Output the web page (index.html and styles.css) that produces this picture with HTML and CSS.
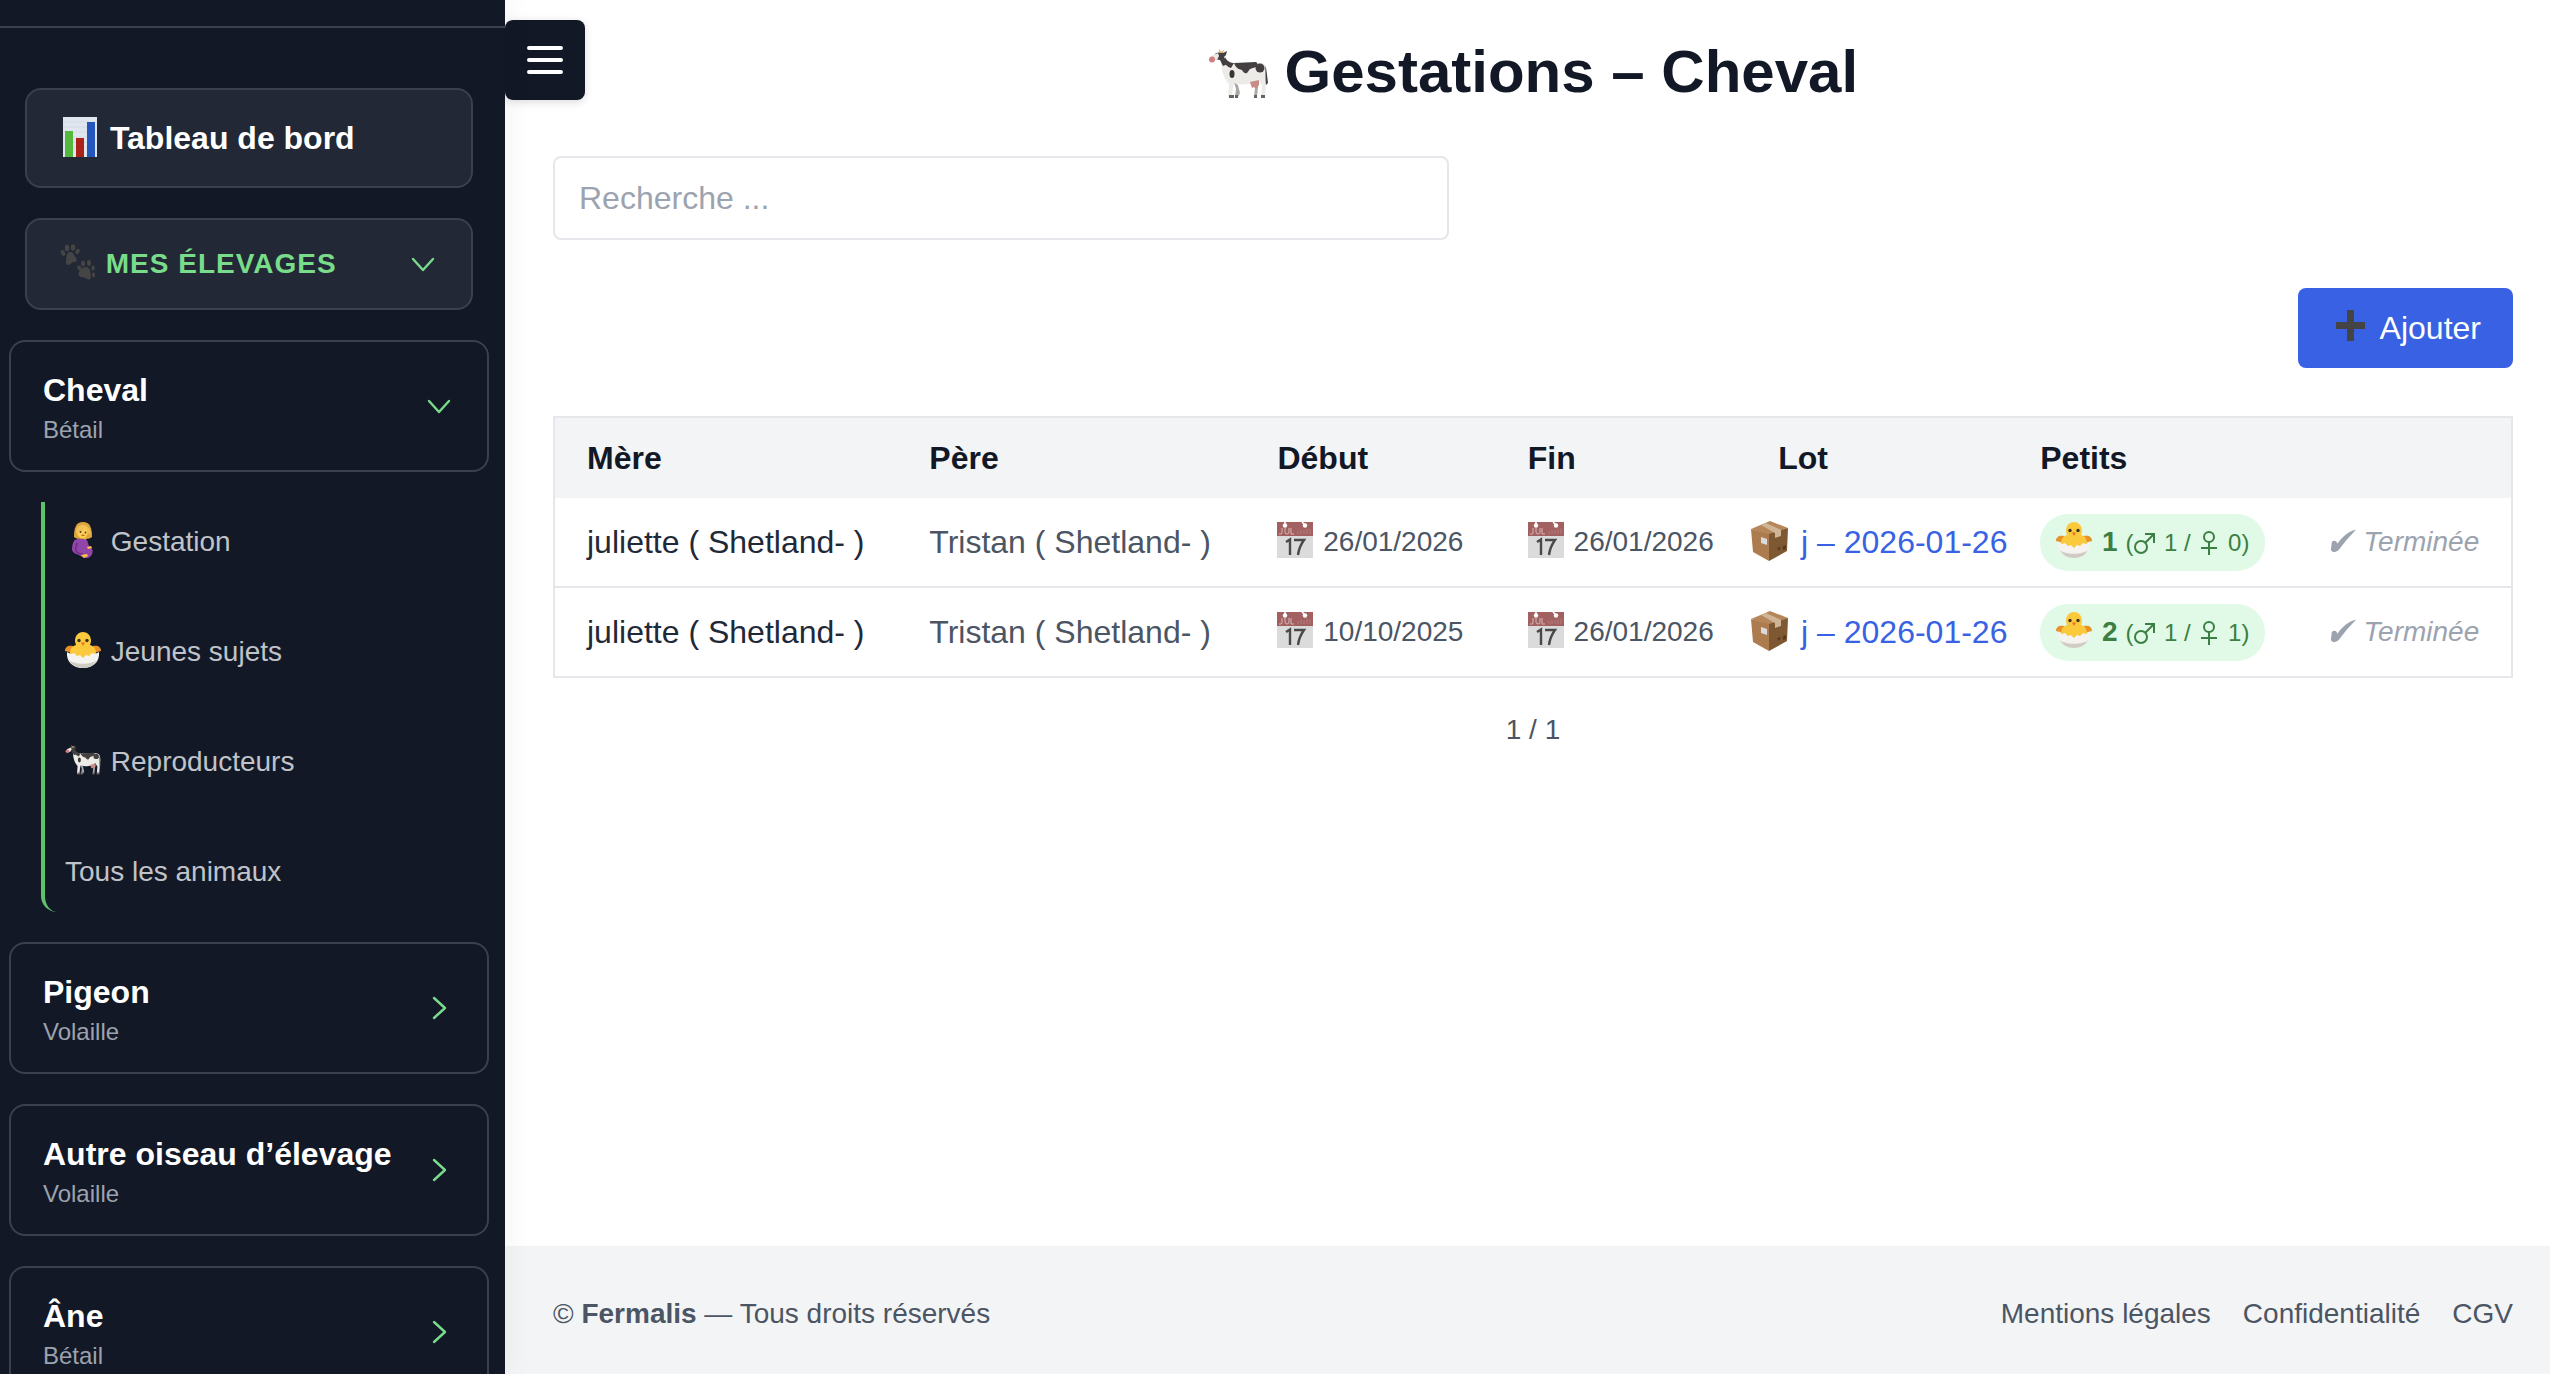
FILE: index.html
```html
<!DOCTYPE html>
<html lang="fr">
<head>
  <meta charset="UTF-8">
  <meta name="viewport" content="width=device-width, initial-scale=1.0">
  <title>Gestations – Cheval</title>
  <link rel="stylesheet" href="styles.css">
</head>
<body>
  <!-- icons -->
  <svg class="sprite" aria-hidden="true">
    <symbol id="chart" viewBox="0 0 40 40">
      <rect x="4" y="0" width="34" height="40" fill="#dfe6f0"/>
      <path d="M4 5h34M4 10h34M4 15h34M4 20h34M4 25h34M4 30h34" stroke="#d3dae5" stroke-width="1"/>
      <rect x="6" y="14" width="8" height="26" fill="#54b83c"/>
      <rect x="17" y="21" width="8" height="19" fill="#ac2218"/>
      <rect x="28" y="5" width="8" height="35" fill="#2456bd"/>
    </symbol>
    <symbol id="paws" viewBox="0 0 36 36">
      <g fill="#454545">
        <ellipse cx="4" cy="9" rx="2" ry="3" transform="rotate(-25 4 9)"/>
        <ellipse cx="8" cy="4" rx="2.2" ry="3.3"/>
        <ellipse cx="14" cy="3.5" rx="2.2" ry="3.3"/>
        <ellipse cx="18.5" cy="7.5" rx="1.9" ry="2.8" transform="rotate(25 18.5 7.5)"/>
        <path d="M11 8c3 0 4 3 5.500 5 2 2.500 1 5-1.500 5-2 0-2 .5-3.500 2-2 2-5 .5-4.500-2.500C7.500 14 7 8 11 8z"/>
        <ellipse cx="20.5" cy="24" rx="1.9" ry="2.8" transform="rotate(-35 20.5 24)"/>
        <ellipse cx="24" cy="19.5" rx="2" ry="3"/>
        <ellipse cx="30" cy="19" rx="2" ry="3"/>
        <ellipse cx="34" cy="24" rx="1.7" ry="2.6"/>
        <ellipse cx="34.5" cy="31" rx="1.5" ry="2.4"/>
        <path d="M27 23c3 0 4 3 4.500 6 .5 3 1 6-1.500 6.500-2 .3-2.500-1.500-4.500-2-3-.5-6-.5-6-3.500 0-3 4-7 7.500-7z"/>
      </g>
    </symbol>
    <symbol id="woman" viewBox="0 0 36 36">
      <path d="M9 15C9 6 11 0 18 0s9 6 9 15c-3 3-15 3-18 0z" fill="#dda63c"/>
      <path d="M15 13h6v7h-6z" fill="#f0b82f"/>
      <path d="M12 8c0-6 11-6 11 0 0 5-2 8-5.500 8S12 13 12 8z" fill="#fdd053"/>
      <path d="M11 11C10 1 25-1 26 13c-2-1-4-3-6-7-2 3-5 4-9 5z" fill="#efbf58"/>
      <circle cx="15.500" cy="10" r=".9" fill="#5b3d17"/>
      <circle cx="20.500" cy="10.500" r=".9" fill="#5b3d17"/>
      <path d="M16.500 13.500q1.500-1 3 0" stroke="#a5491c" fill="none"/>
      <path d="M10 18c5-2 8-1 12 0l2 6c5 1 5 10-1 12-3 1-6-1-9-3-4-1-7-3-7-6s1-8 3-9z" fill="#9245a9"/>
      <path d="M12 21c-1 5-2 6-1 8s4 3 7 3" stroke="#6d2b86" stroke-width="1.500" fill="none"/>
      <path d="M16 33l6-1 1 2-4 2zM22 25l4-1 1 2-4 1z" fill="#fdc042"/>
    </symbol>
    <symbol id="chick" viewBox="0 0 36 36">
      <path d="M0 19c0-4 3-6 8-5l4 8H8l-4-2zM36 19c0-4-3-6-8-5l-4 8h4l4-2z" fill="#e8932a"/>
      <path d="M10 9c0-12 16-12 16 0 0 2-1 3-1 4 4 1 6 4 6 9l-4 6H9l-4-6c0-5 2-8 6-9 0-1-1-2-1-4z" fill="#fbc93c"/>
      <circle cx="14" cy="8.500" r="1.700" fill="#3f3217"/>
      <circle cx="22" cy="8.500" r="1.700" fill="#3f3217"/>
      <path d="M16 10.500h4l-2 3.500z" fill="#e8711d"/>
      <path d="M2 20l4 2 3-1 3 3 3-1 3 3 3-3 3 1 3-3 3 1 4-2c1 10-6 16-16 16S1 30 2 20z" fill="#f4f3f0"/>
      <path d="M4 28c5 5 23 5 28 0-2 5-8 8-14 8S6 33 4 28z" fill="#cfccc4"/>
    </symbol>
    <symbol id="cow" viewBox="0 0 60 50">
      <path d="M26 33l4 3 2 8-2 4h-3l1-8zM46 30l4 8-1 10h-3l1-9z" fill="#aaa8a7"/>
      <path d="M14 10c4 2 8 4 14 4 9 1 20-1 26 0 4 1 5 5 5 12l-1 9-1 13h-4l1-12-4-6c-2 4-6 5-11 5-5 1-9 0-13-1l-1 5-1 9h-4l1-13c-5-5-8-14-8-25z" fill="#ecebe7"/>
      <path d="M8 4l5-1 2 1 4-2-1 4-2 2c1 3 3 5 6 6l-7 3-3-6-6-1-1-2z" fill="#444041"/>
      <path d="M3 7l7-3 1 3-2 4-5 2z" fill="#ece8e3"/>
      <ellipse cx="4" cy="10.500" rx="3" ry="3" fill="#cf8080"/>
      <path d="M11 4l0-4 2 3 3-2-1 3z" fill="#d4ad65"/>
      <path d="M17 8c2 4 5 6 10 6h-1l-3 5c-4-1-6-4-7-7z" fill="#444041"/>
      <path d="M26 14l22-1c2 1 2 3 0 5l-6 2-3 4c-2 1-4-1-5-3-5-1-7-4-8-7z" fill="#444041"/>
      <ellipse cx="24" cy="25" rx="2.500" ry="4" fill="#383536"/>
      <ellipse cx="52" cy="19" rx="4.500" ry="4.500" fill="#444041"/>
      <path d="M57 17c2 4 2 10 3 17l-2 2c-1-6 0-13-1-19z" fill="#444041"/>
      <path d="M42 33l9-2 0 5-3 4-2-2-2 1z" fill="#c88b87"/>
      <path d="M21 46h5v3h-5zM27 46h3v3h-3zM46 46h3v3h-3zM53 46h4v3h-4z" fill="#69625f"/>
    </symbol>
    <symbol id="calendar" viewBox="0 0 36 36">
      <rect width="36" height="36" fill="#dbdbdb"/>
      <rect width="36" height="14" fill="#a26060"/>
      <circle cx="8" cy="3.500" r="2.200" fill="#fff"/>
      <circle cx="28" cy="3.500" r="2.200" fill="#fff"/>
      <path d="M8 0v3M25 0l3 3" stroke="#fff" stroke-width="1.500"/>
      <path d="M5 6v5q0 1.500-3 1M8 6v4q0 2 2 2t2-2V6M14 6v6h3" stroke="#d5b5b5" stroke-width="1" fill="none"/>
      <path d="M21 9v3M24 8v4M27 8v4M30 7v5M33 7v5" stroke="#b67f7f" stroke-width="1"/>
      <path d="M9 20l4-2.500V33M17 18h10q-5 7-6 15" stroke="#484848" stroke-width="2.400" fill="none"/>
    </symbol>
    <symbol id="box" viewBox="0 0 40 40">
      <path d="M1 8L20 0l18 7-18 7z" fill="#b5875b"/>
      <path d="M1 8l18 5v27L3 31z" fill="#ac7b4e"/>
      <path d="M38 7l-19 6v27l18-10z" fill="#7e5833"/>
      <path d="M11 4l5-2 15 7v6l-6 2v-5z" fill="#cfb595"/>
      <path d="M11 16l6 2v6l-6-2z" fill="#d9dadb"/>
      <path d="M27 27l4-1-2 4zM33 25l3-1v4l-3 1z" fill="#57391d"/>
    </symbol>
    <symbol id="plus" viewBox="0 0 40 40">
      <path d="M17 3h7v12h11v7H24v12h-7V22H6v-7h11z" fill="#444"/>
    </symbol>
    <symbol id="check" viewBox="0 0 28 28">
      <path d="M2 15c2-2 5-2 6 2C13 10 19 4 28 2 21 9 15 16 10 23c-3 4-9 4-9 0z" fill="currentColor"/>
    </symbol>
    <symbol id="male" viewBox="0 0 24 28">
      <path d="M12 15L20 7M12 6h9v9" stroke="currentColor" stroke-width="2" fill="none"/>
      <circle cx="8" cy="19" r="6" stroke="currentColor" stroke-width="2" fill="none"/>
    </symbol>
    <symbol id="female" viewBox="0 0 24 28">
      <circle cx="12" cy="9" r="5" stroke="currentColor" stroke-width="2" fill="none"/>
      <path d="M12 14v13M4 20h16" stroke="currentColor" stroke-width="2"/>
    </symbol>
    <symbol id="down" viewBox="0 0 32 32">
      <path d="M6 11l10 11 10-11" fill="none" stroke="currentColor" stroke-width="2.400" stroke-linecap="round" stroke-linejoin="round"/>
    </symbol>
    <symbol id="right" viewBox="0 0 32 32">
      <path d="M11 6l11 10-11 10" fill="none" stroke="currentColor" stroke-width="2.400" stroke-linecap="round" stroke-linejoin="round"/>
    </symbol>
  </svg>

  <div class="layout">
    <aside class="sidebar">
      <div class="sidebar-header"></div>
      <nav class="sidebar-nav">
        <a href="#" class="menu-card dashboard"><span><svg class="emoji emoji-lg"><use href="#chart"/></svg> Tableau de bord</span></a>
        <button type="button" class="menu-card section">
          <span><svg class="emoji"><use href="#paws"/></svg> MES ÉLEVAGES</span>
          <svg class="chevron"><use href="#down"/></svg>
        </button>
        <button type="button" class="animal-card">
          <span class="animal"><span class="animal-name">Cheval</span><span class="animal-type">Bétail</span></span>
          <svg class="chevron"><use href="#down"/></svg>
        </button>
        <div class="submenu">
          <a href="#"><svg class="emoji"><use href="#woman"/></svg> Gestation</a>
          <a href="#"><svg class="emoji"><use href="#chick"/></svg> Jeunes sujets</a>
          <a href="#"><svg class="emoji"><use href="#cow"/></svg> Reproducteurs</a>
          <a href="#">Tous les animaux</a>
        </div>
        <button type="button" class="animal-card">
          <span class="animal"><span class="animal-name">Pigeon</span><span class="animal-type">Volaille</span></span>
          <svg class="chevron"><use href="#right"/></svg>
        </button>
        <button type="button" class="animal-card">
          <span class="animal"><span class="animal-name">Autre oiseau d’élevage</span><span class="animal-type">Volaille</span></span>
          <svg class="chevron"><use href="#right"/></svg>
        </button>
        <button type="button" class="animal-card">
          <span class="animal"><span class="animal-name">Âne</span><span class="animal-type">Bétail</span></span>
          <svg class="chevron"><use href="#right"/></svg>
        </button>
      </nav>
    </aside>

    <div class="page">
      <button type="button" class="toggle" aria-label="Menu">
        <span></span>
        <span></span>
        <span></span>
      </button>
      <main class="content">
        <h1><svg class="emoji emoji-xl"><use href="#cow"/></svg> Gestations – Cheval</h1>
        <input type="search" class="search" placeholder="Recherche ..." aria-label="Recherche">
        <div class="actions">
          <button type="button" class="add"><svg class="emoji emoji-lg"><use href="#plus"/></svg> Ajouter</button>
        </div>
        <table class="list">
          <colgroup>
            <col class="col-mother">
            <col class="col-father">
            <col class="col-date">
            <col class="col-date">
            <col class="col-lot">
            <col class="col-petits">
            <col>
          </colgroup>
          <thead>
            <tr>
              <th>Mère</th>
              <th>Père</th>
              <th>Début</th>
              <th>Fin</th>
              <th>Lot</th>
              <th>Petits</th>
              <th></th>
            </tr>
          </thead>
          <tbody>
            <tr>
              <td class="mother">juliette ( Shetland- )</td>
              <td>Tristan ( Shetland- )</td>
              <td class="date"><svg class="emoji"><use href="#calendar"/></svg> 26/01/2026</td>
              <td class="date"><svg class="emoji"><use href="#calendar"/></svg> 26/01/2026</td>
              <td class="lot"><a href="#"><svg class="emoji emoji-lg"><use href="#box"/></svg> j – 2026-01-26</a></td>
              <td><span class="pill"><svg class="emoji"><use href="#chick"/></svg> <b>1</b> <small>(<svg class="sex"><use href="#male"/></svg> 1 / <svg class="sex"><use href="#female"/></svg> 0)</small></span></td>
              <td class="status"><svg class="check"><use href="#check"/></svg> Terminée</td>
            </tr>
            <tr>
              <td class="mother">juliette ( Shetland- )</td>
              <td>Tristan ( Shetland- )</td>
              <td class="date"><svg class="emoji"><use href="#calendar"/></svg> 10/10/2025</td>
              <td class="date"><svg class="emoji"><use href="#calendar"/></svg> 26/01/2026</td>
              <td class="lot"><a href="#"><svg class="emoji emoji-lg"><use href="#box"/></svg> j – 2026-01-26</a></td>
              <td><span class="pill"><svg class="emoji"><use href="#chick"/></svg> <b>2</b> <small>(<svg class="sex"><use href="#male"/></svg> 1 / <svg class="sex"><use href="#female"/></svg> 1)</small></span></td>
              <td class="status"><svg class="check"><use href="#check"/></svg> Terminée</td>
            </tr>
          </tbody>
        </table>
        <p class="pagination">1 / 1</p>
      </main>
      <footer class="footer">
        <span>© <strong>Fermalis</strong> — Tous droits réservés</span>
        <nav class="footer-links">
          <a href="#">Mentions légales</a>
          <a href="#">Confidentialité</a>
          <a href="#">CGV</a>
        </nav>
      </footer>
    </div>
  </div>
</body>
</html>
```

FILE: styles.css
```css
* {
  box-sizing: border-box;
}

body {
  margin: 0;
  font-family: "Liberation Sans", Arial, sans-serif;
  font-size: 32px;
  line-height: 48px;
  color: #4b5563;
  background-color: #fff;
}

a {
  color: inherit;
  text-decoration: none;
}

button {
  font: inherit;
  color: inherit;
  cursor: pointer;
}

.sprite {
  position: absolute;
  width: 0;
  height: 0;
}

.emoji {
  width: 36px;
  height: 36px;
  margin-right: 2px;
  vertical-align: -7px;
}

.emoji-lg {
  width: 40px;
  height: 40px;
  vertical-align: -8px;
}

.emoji-xl {
  width: 60px;
  height: 60px;
  margin-right: 0;
  vertical-align: -12px;
}

.layout {
  display: flex;
  height: 100vh;
  overflow: hidden;
}

/* sidebar */
.sidebar {
  flex: 0 0 505px;
  overflow: hidden;
  color: #fff;
  background-color: #121826;
  box-shadow: 0 0 30px rgba(0, 0, 0, 0.06);
  z-index: 1;
}

.sidebar-header {
  height: 28px;
  border-bottom: 2px solid #3a404d;
}

.sidebar-nav {
  display: flex;
  flex-direction: column;
  gap: 30px;
  padding: 60px 16px 30px 9px;
}

.menu-card,
.animal-card {
  display: flex;
  align-items: center;
  justify-content: space-between;
  padding: 24px 32px;
  border: 2px solid #3a404d;
  border-radius: 16px;
  text-align: left;
  background-color: transparent;
}

.menu-card {
  margin: 0 16px;
  background-color: #222835;
}

.dashboard {
  font-weight: bold;
}

.section {
  font-size: 28px;
  font-weight: bold;
  line-height: 40px;
  letter-spacing: 1px;
  color: #78dc8a;
}

.chevron {
  width: 32px;
  height: 32px;
  color: #78dc8a;
}

.animal {
  display: flex;
  flex-direction: column;
}

.animal-name {
  font-weight: bold;
}

.animal-type {
  font-size: 24px;
  line-height: 32px;
  color: #9ca3af;
}

.submenu {
  display: flex;
  flex-direction: column;
  gap: 30px;
  margin: 0 -16px 0 32px;
  border-left: 4px solid #5ec26a;
  border-radius: 0 0 16px 16px;
  font-size: 28px;
  line-height: 40px;
  color: #c0c3c9;
}

.submenu a {
  padding: 20px;
}

/* page */
.page {
  position: relative;
  display: flex;
  flex-direction: column;
  flex: 1;
  min-width: 0;
}

.toggle {
  position: absolute;
  top: 20px;
  left: 0;
  display: flex;
  flex-direction: column;
  align-items: center;
  justify-content: center;
  gap: 8px;
  width: 80px;
  height: 80px;
  padding: 0;
  border: 0;
  border-radius: 8px;
  background-color: #121826;
  box-shadow: 0 2px 8px rgba(0, 0, 0, 0.15);
}

.toggle span {
  width: 36px;
  height: 4px;
  border-radius: 2px;
  background-color: #fff;
}

.content {
  flex: 1;
  padding: 36px 37px 0 48px;
}

h1 {
  margin: 0 0 48px;
  font-size: 60px;
  line-height: 72px;
  text-align: center;
  color: #121826;
}

.search {
  display: block;
  width: 896px;
  max-width: 100%;
  padding: 16px 24px;
  border: 2px solid #e5e7eb;
  border-radius: 8px;
  font: inherit;
  height: 84px;
  color: #121826;
  background-color: #fff;
}

.search::placeholder {
  color: #9ca3af;
}

.actions {
  display: flex;
  justify-content: flex-end;
  margin: 48px 0;
}

.add {
  padding: 16px 32px;
  border: 0;
  border-radius: 8px;
  color: #fff;
  background-color: #3862e3;
}

.list {
  width: 100%;
  table-layout: fixed;
  border-collapse: separate;
  border-spacing: 0;
  border: 2px solid #e5e7eb;
}

.col-mother {
  width: 17.5%;
}

.col-father {
  width: 17.8%;
}

.col-date {
  width: 12.8%;
}

.col-lot {
  width: 13.4%;
}

.col-petits {
  width: 14.8%;
}

th,
td {
  padding: 16px 32px;
  text-align: left;
  white-space: nowrap;
}

th {
  color: #121826;
  background-color: #f3f4f6;
}

td {
  height: 88px;
  padding: 0 32px;
}

tbody tr + tr td {
  height: 90px;
  border-top: 2px solid #e5e7eb;
}

.mother {
  color: #1f2937;
}

.date,
.status {
  font-size: 28px;
}

td.lot {
  padding: 0 4px;
  color: #3862e3;
}

.pill {
  display: inline-block;
  padding: 8px 16px;
  border-radius: 28px;
  font-size: 28px;
  line-height: 40px;
  vertical-align: middle;
  color: #3c7f43;
  background-color: #e1fae7;
}

.pill small {
  font-size: 24px;
}

.sex {
  width: 24px;
  height: 28px;
  vertical-align: -5px;
}

.status {
  text-align: right;
  font-style: italic;
  color: #9ca3af;
}

.check {
  width: 26px;
  height: 26px;
  vertical-align: -3px;
}

.pagination {
  margin: 32px 0 0;
  font-size: 28px;
  line-height: 40px;
  text-align: center;
}

.footer {
  display: flex;
  justify-content: space-between;
  padding: 48px 37px 40px 48px;
  font-size: 28px;
  line-height: 40px;
  background-color: #f3f4f6;
}

.footer-links {
  display: flex;
  gap: 32px;
}
```
